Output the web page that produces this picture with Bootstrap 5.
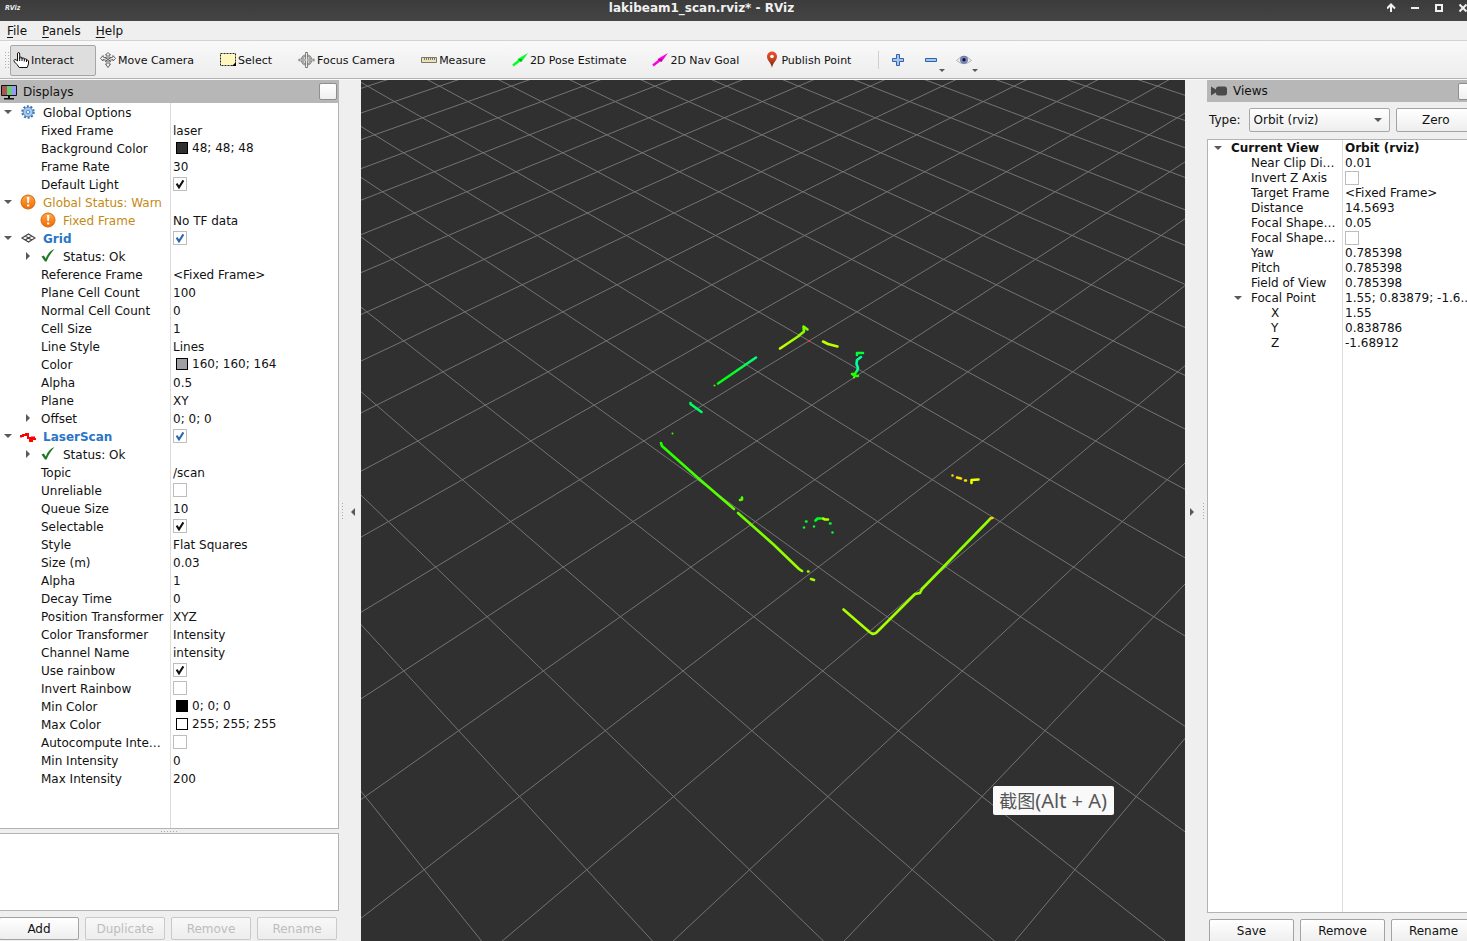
<!DOCTYPE html>
<html lang="en">
<head>
<meta charset="utf-8">
<meta name="viewport" content="width=device-width, initial-scale=1">
<title>lakibeam1_scan.rviz* - RViz</title>
<link href="https://cdn.jsdelivr.net/npm/bootstrap@5.3.0/dist/css/bootstrap.min.css" rel="stylesheet">
<style>
  body { font: 12px/18px "DejaVu Sans", sans-serif; color: #111; background: #efefef; }
  /* the window runs slightly past the right edge of the screen */
  .app { width: calc(100% + 11px); }
  button, select, input { font: inherit; color: inherit; }
  svg { display: block; flex: none; }

  .titlebar { height: 21px; background: linear-gradient(#3b3b3b, #454545); color: #f0f0f0; }
  .titlebar h1 { font-size: 12px; line-height: 16px; font-weight: 700; }
  .brand-mark { width: 19px; padding-left: 5px; font: italic bold 7px/16px "DejaVu Sans Condensed", sans-serif; }
  .win-controls { width: 98px; margin-left: -4px; height: 16px; }
  .win-controls button { width: 24px; flex: none; border: 0; padding: 0; background: none; display: grid; place-items: center; }

  .menubar { height: 20px; border-bottom: 1px solid #d3d3d3; gap: 1px; }
  .menubar a { color: #111; padding: 0 7px; line-height: 21px; text-decoration: none; }
  .menubar u { text-underline-offset: 2px; }

  .toolstrip { height: 38px; padding-top: 1px; border-bottom: 1px solid #b4b4b4; background: linear-gradient(#f9f9f9, #ededed); font-size: 11px; }
  .grip { width: 6px; height: 18px; background: radial-gradient(circle, #b4b4b4 1px, transparent 1px) 0 0/3px 3px; }
  .tool { height: 31px; border: 1px solid transparent; border-radius: 2px; background: none; padding: 2px 21px 0 2px; gap: 2px; margin-right: 1px; white-space: nowrap; }
  .tool svg { margin-bottom: 2px; }
  .tool.active { background: #dedede; border-color: #a6a6a6; }
  .tool-sep { width: 1px; height: 18px; background: #d0d0d0; margin: 0 7px 0 4px; }
  .tool-mini { border: 0; background: none; padding: 0; width: 24px; height: 30px; margin-right: 9px; display: grid; place-items: center; position: relative; }
  .tool-mini .drop { position: absolute; right: -2px; bottom: 3px; }

  .workspace { border-top: 1px solid #fafafa; }
  .pane-left { width: 339px; padding-bottom: 1px; }
  .pane-right { width: 271px; }
  .dock-head { background: #b7b7b7; height: 22px; padding-right: 2px; }
  .dock-head h2 { font-size: 12px; line-height: 22px; font-weight: 400; margin: 0 0 0 6px; }
  .pane-left .dock-head { height: 23px; }
  .dock-btn { width: 18px; height: 17px; padding: 0; border: 1px solid #8f8f8f; border-radius: 2px; background: linear-gradient(#fff, #f0f0f0); }

  .tree-box { border: 1px solid #b3b3b3; background: linear-gradient(#dcdcdc, #dcdcdc) var(--split) 0/1px 100% no-repeat #fff; overflow: hidden; min-height: 0; }
  .tree-left { --split: 170px; border-width: 0 1px 1px 0; }
  .tree-right { --split: 134px; }
  .tree { table-layout: fixed; width: 100%; --bs-table-bg: transparent; --bs-table-color: #111; color: #111; }
  .tree > tbody > tr > * { padding: 0; height: var(--row); line-height: calc(var(--row) - 2px); white-space: nowrap; overflow: hidden; font-weight: 400; vertical-align: top; text-align: left; }
  .tree > tbody > tr > td { padding: 2px 0 0 2px; }
  .tree-left .tree { --row: 18px; }
  .tree-right .tree { --row: 15px; }
  .tree .name-col { width: calc(var(--split) + 1px); }
  .tree-right .node { padding-left: 2px; }
  .node, .cell { display: flex; align-items: center; height: var(--row); }
  .cell { margin-top: -2px; }
  .node > .lvl1 { width: 20px; flex: none; }
  .node > .lvl2 { width: 40px; flex: none; }
  .twist { width: 20px; flex: none; padding-left: 4px; }
  .txt { padding: 2px 0 0 1px; }
  .ico + .txt { padding-left: 7px; }
  .warn { color: #c58a14; }
  .disp { color: #2a76c6; font-weight: 700; }
  .swatch { width: 12px; height: 12px; border: 1px solid #000; margin: 0 4px 0 3px; flex: none; }
  .tick { appearance: none; width: 14px; height: 14px; border: 1px solid #bdbdbd; border-radius: 0; background-color: #fff; margin: 0; display: block; flex: none; }
  .tick:checked { background: #fff url("data:image/svg+xml,%3Csvg xmlns='http://www.w3.org/2000/svg' viewBox='0 0 12 12'%3E%3Cpath d='M2.6 5.6 5 9.4 9.4 2.4' fill='none' stroke='%23111' stroke-width='2'/%3E%3C/svg%3E") center/12px no-repeat; }
  .tick-blue:checked { background-image: url("data:image/svg+xml,%3Csvg xmlns='http://www.w3.org/2000/svg' viewBox='0 0 12 12'%3E%3Cpath d='M2.6 5.6 5 9.4 9.4 2.4' fill='none' stroke='%232a66ad' stroke-width='2'/%3E%3C/svg%3E"); }

  .split-h { height: 4px; display: grid; place-items: center; }
  .split-h i { width: 18px; height: 1px; background: repeating-linear-gradient(90deg, #aaa 0 1px, transparent 1px 3px); }
  .info-box { height: 78px; background: #fff; border: 1px solid #b3b3b3; border-left: 0; }
  .actions { gap: 6px; padding: 6px 2px 0 0; margin-left: -1px; }
  .pane-right .actions { padding: 6px 2px 0; margin: 0 0 -2px; }
  .qbtn { flex: 1 1 0; height: 23px; line-height: 22px; padding: 0; border: 1px solid #a3a3a3; border-radius: 2px; background: linear-gradient(#fff, #eee); color: #111; font-size: 12px; text-align: center; }
  .pane-right .qbtn { height: 24px; }
  .qbtn:disabled { color: #bdbdbd; border-color: #c9c9c9; background: linear-gradient(#f8f8f8, #ededed); }
  .pane-right .type-row { padding: 6px 2px 7px; gap: 6px; }
  .type-row label { margin-right: 2px; }
  .type-row select { width: 141px; height: 24px; padding: 0 20px 0 4px; border: 1px solid #a8a8a8; border-radius: 2px; font-size: 12px; line-height: 18px; color: #111;
    background: url("data:image/svg+xml,%3Csvg xmlns='http://www.w3.org/2000/svg' viewBox='0 0 8 4'%3E%3Cpath d='M0 0h8L4 4z' fill='%23595959'/%3E%3C/svg%3E") right 7px center/8px 4px no-repeat, linear-gradient(#fff, #eee); }

  .gutter { width: 22px; padding: 2px 3px 0; }
  .gutter button { border: 0; background: none; padding: 0; }
  .gutter i { width: 1px; height: 17px; background: repeating-linear-gradient(#aaa 0 1px, transparent 1px 3px); }

  .view3d { background: #303030; min-width: 0; overflow: hidden; }
  .view3d svg { width: 100%; height: 100%; }
  .hint { right: 71px; bottom: 126px; height: 29px; padding: 0 7px 0 6px; background: #f9f9f9; border-radius: 2px; color: #575757; font: 20px/29px "Noto Sans", "Noto Sans CJK SC", sans-serif; white-space: nowrap; }
  .hint span { font-size: 18px; }
</style>
</head>
<body class="overflow-hidden">

<svg width="0" height="0" class="position-absolute" aria-hidden="true">
  <defs>
    <linearGradient id="orange" x1="0" y1="0" x2="0" y2="1"><stop offset="0" stop-color="#ffa64d"/><stop offset="1" stop-color="#ef6a00"/></linearGradient>
    <linearGradient id="pin" x1="0" y1="0" x2="0" y2="1"><stop offset="0" stop-color="#f0502c"/><stop offset=".5" stop-color="#c4401c"/><stop offset="1" stop-color="#4a2a10"/></linearGradient>
    <symbol id="open" viewBox="0 0 8 4"><path d="M0 0h8L4 4z" fill="#595959"/></symbol>
    <symbol id="shut" viewBox="0 0 8 8"><path d="M2 0v8l4-4z" fill="#595959"/></symbol>
    <symbol id="gear" viewBox="0 0 16 16"><circle cx="8" cy="8" r="6.500" fill="none" stroke="#3a72b8" stroke-width="2.400" stroke-dasharray="2.200 1.880"/><circle cx="8" cy="8" r="5.500" fill="#a9c8ea" stroke="#4a80c2"/><circle cx="8" cy="8" r="2" fill="#e4eefa" stroke="#4a80c2"/></symbol>
    <symbol id="alert" viewBox="0 0 16 16"><circle cx="8" cy="8" r="7" fill="url(#orange)" stroke="#d4690c"/><path d="M7 3h2.400L9 9H7.400zM7.100 10.400h2.200v2.200H7.100z" fill="#fff"/></symbol>
    <symbol id="mesh" viewBox="0 0 16 16"><path d="M2 8l6.500-4L15 8l-6.500 4zM5.200 6l6.600 4M11.800 6l-6.600 4" fill="none" stroke="#444" stroke-width="1.200"/></symbol>
    <symbol id="good" viewBox="0 0 16 16"><path d="M1.500 8.500l2.300-1 2 2.900C7.500 6 10 2.800 14.500 1 11 5 8.500 8.500 6.600 13.500H5z" fill="#1d7a24"/></symbol>
    <symbol id="scan" viewBox="0 0 16 16"><path d="M1 9.500V8h2V7h3V6h2v4h2v3h2V9.500h2V11h2" fill="none" stroke="#f00" stroke-width="2"/></symbol>
  </defs>
</svg>

<div class="app vh-100 d-flex flex-column">
  <header class="titlebar d-flex flex-shrink-0">
    <span class="brand-mark flex-shrink-0">RViz</span>
    <h1 class="flex-fill text-center m-0">lakibeam1_scan.rviz* - RViz</h1>
    <div class="win-controls d-flex flex-shrink-0">
      <button type="button" aria-label="Shade"><svg width="10" height="10" viewBox="0 0 10 10"><path d="M4 9V2M0 5.500 4 1.500l4 4" fill="none" stroke="#f0f0f0" stroke-width="2"/></svg></button>
      <button type="button" aria-label="Minimize"><svg width="10" height="10" viewBox="0 0 10 10"><path d="M0 5h8" stroke="#f0f0f0" stroke-width="2"/></svg></button>
      <button type="button" aria-label="Maximize"><svg width="10" height="10" viewBox="0 0 10 10"><path d="M1 2h6v6H1z" fill="none" stroke="#f0f0f0" stroke-width="2"/></svg></button>
      <button type="button" aria-label="Close"><svg width="10" height="10" viewBox="0 0 10 10"><path d="M.5 1.500l7 7M7.500 1.500l-7 7" stroke="#f0f0f0" stroke-width="2"/></svg></button>
    </div>
  </header>

  <nav class="menubar d-flex flex-shrink-0" aria-label="Menu">
    <a href="#"><u>F</u>ile</a><a href="#"><u>P</u>anels</a><a href="#"><u>H</u>elp</a>
  </nav>

  <div class="toolstrip d-flex align-items-center flex-shrink-0" role="toolbar">
    <span class="grip ms-1 flex-shrink-0"></span>
    <button type="button" class="tool active d-flex align-items-center"><svg width="16" height="16" viewBox="0 0 16 16"><path d="M4.500 9V2Q4.500.5 5.600.5T6.700 2v4.500V5.500Q7.800 4.600 9 5.600v1Q10 5.500 11.300 6.300v1q1-.8 2.200-.1v1q1.800-.6 2 .8V12l-1.300 3.500h-8L4 12.500 1.500 10Q.2 8 1.800 7.500 3 7.300 4.500 9z" fill="#fff" stroke="#111"/><path d="M6.700 6v3M9 6v3M11.300 7v2.500M13.500 8v2" stroke="#111"/></svg>Interact</button>
    <button type="button" class="tool d-flex align-items-center"><svg width="16" height="16" viewBox="0 0 16 16"><g fill="#f4f4f4" stroke="#555" stroke-width=".9"><path d="M8 .5 10.500 3H9v3.500L13 5V3.500l2.500 3L13 9V7.500L9 8.500V12h1.500L8 15.500 5.500 12H7V8.500L3 7.500V9L.5 6.500 3 3.500V5l4 1.500V3H5.500z"/><path d="M5 5l6 5M11 5l-6 5"/></g></svg>Move Camera</button>
    <button type="button" class="tool d-flex align-items-center"><svg width="16" height="16" viewBox="0 0 16 16"><path d="M.5 1.500h15v12H.5z" fill="#fff7bd" stroke="#222" stroke-dasharray="2 1"/><path d="M16 10v4h-4z"/></svg>Select</button>
    <button type="button" class="tool d-flex align-items-center"><svg width="17" height="16" viewBox="0 0 17 16"><g fill="none" stroke="#777"><circle cx="8.500" cy="8" r="4.500" stroke-width="2.400"/><circle cx="8.500" cy="8" r="4.500" stroke="#ddd" stroke-width=".8"/><path d="M8.500 0v16M.5 8h16" stroke-width="2.600"/><path d="M8.500 1v14M1.500 8h14" stroke="#e8e8e8"/></g></svg>Focus Camera</button>
    <button type="button" class="tool d-flex align-items-center"><svg width="16" height="16" viewBox="0 0 16 16"><path d="M.5 5.500h15v5H.5z" fill="#ece3ae" stroke="#777"/><path d="M3.500 6v2M5.500 6v2M7.500 6v2M9.500 6v2M11.500 6v2M13.500 6v2" stroke="#777"/></svg>Measure</button>
    <button type="button" class="tool d-flex align-items-center"><svg width="16" height="16" viewBox="0 0 16 16"><path d="M1 13.500 8 8" stroke="#0f2" stroke-width="2.500"/><path d="M5.500 7 16 1 9.500 10z" fill="#0f2"/><path d="M6 7l3 3 1-3z" fill="#0a9a1c"/></svg>2D Pose Estimate</button>
    <button type="button" class="tool d-flex align-items-center"><svg width="16" height="16" viewBox="0 0 16 16"><path d="M1 13.500 8 8" stroke="#f0d" stroke-width="2.500"/><path d="M5.500 7 16 1 9.500 10z" fill="#f0d"/><path d="M6 7l3 3 1-3z" fill="#a0088c"/></svg>2D Nav Goal</button>
    <button type="button" class="tool d-flex align-items-center"><svg width="14" height="18" viewBox="1 0 14 18"><path d="M8 17C7.500 12 3 10 3 5.500a5 5 0 0 1 10 0C13 10 8.500 12 8 17z" fill="url(#pin)"/><circle cx="8" cy="5.500" r="1.800" fill="#fff"/></svg>Publish Point</button>
    <span class="tool-sep flex-shrink-0"></span>
    <button type="button" class="tool-mini" aria-label="Add tool"><svg width="14" height="14" viewBox="0 0 14 14"><path d="M5.500 1.500h3v4h4v3h-4v4h-3v-4h-4v-3h4z" fill="#a6c6ec" stroke="#2f62a8"/></svg></button>
    <button type="button" class="tool-mini" aria-label="Remove tool"><svg width="14" height="14" viewBox="0 0 14 14"><path d="M1.500 5.500h11v3h-11z" fill="#a6c6ec" stroke="#2f62a8"/></svg><svg class="drop" width="6" height="3"><use href="#open"/></svg></button>
    <button type="button" class="tool-mini" aria-label="Visibility"><svg width="16" height="14" viewBox="0 0 16 14"><path d="M.5 7.500Q8-1 15.500 7.500 8 14 .5 7.500z" fill="#eee" stroke="#b4b4b4"/><circle cx="8" cy="6.800" r="3.700" fill="#7c8cc0" stroke="#5a6490" stroke-width=".6"/><circle cx="8" cy="6.800" r="1.700" fill="#101430"/></svg><svg class="drop" width="6" height="3"><use href="#open"/></svg></button>
  </div>

  <main class="workspace d-flex flex-fill overflow-hidden">
    <section class="pane-left d-flex flex-column flex-shrink-0">
      <div class="dock-head d-flex align-items-center flex-shrink-0">
        <svg width="17" height="16" viewBox="0 0 17 16"><path d="M1.500 1.500h15v10h-15z" fill="#b9b9c9" stroke="#111"/><path d="M2 2h5v9H2z" fill="#a55"/><path d="M7 2h5v9H7z" fill="#6c7"/><path d="M12 2h4v9h-4z" fill="#99e"/><path d="M8 12h2v2h4v1.500H4V14h4z" fill="#111"/></svg>
        <h2>Displays</h2>
        <button type="button" class="dock-btn ms-auto" aria-label="Float Displays"></button>
      </div>
      <div class="tree-box tree-left flex-fill">
        <table class="table table-borderless m-0 tree">
          <colgroup><col class="name-col"><col></colgroup>
          <tbody>
            <tr><th scope="row"><div class="node"><span class="twist"><svg width="8" height="4"><use href="#open"/></svg></span><svg class="ico" width="16" height="14"><use href="#gear"/></svg><span class="txt">Global Options</span></div></th><td></td></tr>
            <tr><th scope="row"><div class="node"><span class="lvl2"></span><span class="txt">Fixed Frame</span></div></th><td>laser</td></tr>
            <tr><th scope="row"><div class="node"><span class="lvl2"></span><span class="txt">Background Color</span></div></th><td><div class="cell"><span class="swatch" style="background:rgb(48,48,48)"></span>48; 48; 48</div></td></tr>
            <tr><th scope="row"><div class="node"><span class="lvl2"></span><span class="txt">Frame Rate</span></div></th><td>30</td></tr>
            <tr><th scope="row"><div class="node"><span class="lvl2"></span><label class="txt" for="light">Default Light</label></div></th><td><div class="cell"><input class="tick" type="checkbox" id="light" checked></div></td></tr>
            <tr><th scope="row"><div class="node"><span class="twist"><svg width="8" height="4"><use href="#open"/></svg></span><svg class="ico" width="16" height="16"><use href="#alert"/></svg><span class="txt warn">Global Status: Warn</span></div></th><td></td></tr>
            <tr><th scope="row"><div class="node"><span class="lvl2"></span><svg class="ico" width="16" height="16"><use href="#alert"/></svg><span class="txt warn">Fixed Frame</span></div></th><td>No TF data</td></tr>
            <tr><th scope="row"><div class="node"><span class="twist"><svg width="8" height="4"><use href="#open"/></svg></span><svg class="ico" width="16" height="16"><use href="#mesh"/></svg><label class="txt disp" for="grid-on">Grid</label></div></th><td><div class="cell"><input class="tick tick-blue" type="checkbox" id="grid-on" checked></div></td></tr>
            <tr><th scope="row"><div class="node"><span class="lvl1"></span><span class="twist"><svg width="8" height="8"><use href="#shut"/></svg></span><svg class="ico" width="16" height="16"><use href="#good"/></svg><span class="txt">Status: Ok</span></div></th><td></td></tr>
            <tr><th scope="row"><div class="node"><span class="lvl2"></span><span class="txt">Reference Frame</span></div></th><td>&lt;Fixed Frame&gt;</td></tr>
            <tr><th scope="row"><div class="node"><span class="lvl2"></span><span class="txt">Plane Cell Count</span></div></th><td>100</td></tr>
            <tr><th scope="row"><div class="node"><span class="lvl2"></span><span class="txt">Normal Cell Count</span></div></th><td>0</td></tr>
            <tr><th scope="row"><div class="node"><span class="lvl2"></span><span class="txt">Cell Size</span></div></th><td>1</td></tr>
            <tr><th scope="row"><div class="node"><span class="lvl2"></span><span class="txt">Line Style</span></div></th><td>Lines</td></tr>
            <tr><th scope="row"><div class="node"><span class="lvl2"></span><span class="txt">Color</span></div></th><td><div class="cell"><span class="swatch" style="background:rgb(160,160,164)"></span>160; 160; 164</div></td></tr>
            <tr><th scope="row"><div class="node"><span class="lvl2"></span><span class="txt">Alpha</span></div></th><td>0.5</td></tr>
            <tr><th scope="row"><div class="node"><span class="lvl2"></span><span class="txt">Plane</span></div></th><td>XY</td></tr>
            <tr><th scope="row"><div class="node"><span class="lvl1"></span><span class="twist"><svg width="8" height="8"><use href="#shut"/></svg></span><span class="txt">Offset</span></div></th><td>0; 0; 0</td></tr>
            <tr><th scope="row"><div class="node"><span class="twist"><svg width="8" height="4"><use href="#open"/></svg></span><svg class="ico" width="16" height="16"><use href="#scan"/></svg><label class="txt disp" for="scan-on">LaserScan</label></div></th><td><div class="cell"><input class="tick tick-blue" type="checkbox" id="scan-on" checked></div></td></tr>
            <tr><th scope="row"><div class="node"><span class="lvl1"></span><span class="twist"><svg width="8" height="8"><use href="#shut"/></svg></span><svg class="ico" width="16" height="16"><use href="#good"/></svg><span class="txt">Status: Ok</span></div></th><td></td></tr>
            <tr><th scope="row"><div class="node"><span class="lvl2"></span><span class="txt">Topic</span></div></th><td>/scan</td></tr>
            <tr><th scope="row"><div class="node"><span class="lvl2"></span><label class="txt" for="unreliable">Unreliable</label></div></th><td><div class="cell"><input class="tick" type="checkbox" id="unreliable"></div></td></tr>
            <tr><th scope="row"><div class="node"><span class="lvl2"></span><span class="txt">Queue Size</span></div></th><td>10</td></tr>
            <tr><th scope="row"><div class="node"><span class="lvl2"></span><label class="txt" for="selectable">Selectable</label></div></th><td><div class="cell"><input class="tick" type="checkbox" id="selectable" checked></div></td></tr>
            <tr><th scope="row"><div class="node"><span class="lvl2"></span><span class="txt">Style</span></div></th><td>Flat Squares</td></tr>
            <tr><th scope="row"><div class="node"><span class="lvl2"></span><span class="txt">Size (m)</span></div></th><td>0.03</td></tr>
            <tr><th scope="row"><div class="node"><span class="lvl2"></span><span class="txt">Alpha</span></div></th><td>1</td></tr>
            <tr><th scope="row"><div class="node"><span class="lvl2"></span><span class="txt">Decay Time</span></div></th><td>0</td></tr>
            <tr><th scope="row"><div class="node"><span class="lvl2"></span><span class="txt">Position Transformer</span></div></th><td>XYZ</td></tr>
            <tr><th scope="row"><div class="node"><span class="lvl2"></span><span class="txt">Color Transformer</span></div></th><td>Intensity</td></tr>
            <tr><th scope="row"><div class="node"><span class="lvl2"></span><span class="txt">Channel Name</span></div></th><td>intensity</td></tr>
            <tr><th scope="row"><div class="node"><span class="lvl2"></span><label class="txt" for="rainbow">Use rainbow</label></div></th><td><div class="cell"><input class="tick" type="checkbox" id="rainbow" checked></div></td></tr>
            <tr><th scope="row"><div class="node"><span class="lvl2"></span><label class="txt" for="inv-rainbow">Invert Rainbow</label></div></th><td><div class="cell"><input class="tick" type="checkbox" id="inv-rainbow"></div></td></tr>
            <tr><th scope="row"><div class="node"><span class="lvl2"></span><span class="txt">Min Color</span></div></th><td><div class="cell"><span class="swatch" style="background:rgb(0,0,0)"></span>0; 0; 0</div></td></tr>
            <tr><th scope="row"><div class="node"><span class="lvl2"></span><span class="txt">Max Color</span></div></th><td><div class="cell"><span class="swatch" style="background:rgb(255,255,255)"></span>255; 255; 255</div></td></tr>
            <tr><th scope="row"><div class="node"><span class="lvl2"></span><label class="txt" for="autocompute">Autocompute Inte…</label></div></th><td><div class="cell"><input class="tick" type="checkbox" id="autocompute"></div></td></tr>
            <tr><th scope="row"><div class="node"><span class="lvl2"></span><span class="txt">Min Intensity</span></div></th><td>0</td></tr>
            <tr><th scope="row"><div class="node"><span class="lvl2"></span><span class="txt">Max Intensity</span></div></th><td>200</td></tr>
          </tbody>
        </table>
      </div>
      <div class="split-h flex-shrink-0"><i></i></div>
      <div class="info-box flex-shrink-0"></div>
      <div class="actions d-flex flex-shrink-0">
        <button type="button" class="qbtn">Add</button>
        <button type="button" class="qbtn" disabled>Duplicate</button>
        <button type="button" class="qbtn" disabled>Remove</button>
        <button type="button" class="qbtn" disabled>Rename</button>
      </div>
    </section>

    <div class="gutter d-flex align-items-center flex-shrink-0">
      <i></i>
      <button type="button" class="ms-2" aria-label="Hide left panels"><svg width="4" height="8" viewBox="0 0 4 8"><path d="M4 0v8L0 4z" fill="#595959"/></svg></button>
    </div>

    <section class="view3d position-relative flex-fill" aria-label="3D view">
      <svg viewBox="361 80 824 861" preserveAspectRatio="xMidYMid slice">
        <defs>
          <linearGradient id="g1" gradientUnits="userSpaceOnUse" x1="661" y1="442" x2="802" y2="570"><stop offset="0" stop-color="#2f0"/><stop offset="1" stop-color="#a0ff00"/></linearGradient>
          <linearGradient id="g2" gradientUnits="userSpaceOnUse" x1="717" y1="384" x2="756" y2="357"><stop offset=".3" stop-color="#0f1"/><stop offset="1" stop-color="#00ff80"/></linearGradient>
          <linearGradient id="g3" gradientUnits="userSpaceOnUse" x1="780" y1="349" x2="805" y2="327"><stop offset="0" stop-color="#cf0"/><stop offset="1" stop-color="#7f0"/></linearGradient>
          <linearGradient id="g4" gradientUnits="userSpaceOnUse" x1="873" y1="635" x2="992" y2="518"><stop offset="0" stop-color="#af0"/><stop offset=".8" stop-color="#8f0"/><stop offset=".98" stop-color="#9f0"/><stop offset="1" stop-color="#fc0"/></linearGradient>
        </defs>
        <path id="ground" fill="none" stroke="#747476" stroke-width="1"/>
        <g fill="none" stroke-width="2.600" stroke-linecap="round" stroke-linejoin="round">
          <path stroke="url(#g1)" d="M661 443l1 3 36 32 36 31M738 513l35 31 26 25 3 2"/>
          <path stroke="#9f0" d="M808 571.500h.5M811 579l3 1"/>
          <path stroke="#af0" d="M843.500 609.500l26 22.500"/>
          <path stroke="url(#g4)" d="M871 633l2 1 3-1 39-39 5-1 2-4 69-71h1.500"/>
          <path stroke="#0f2" d="M806 521.500h.5M804 527.500h0M814 526.500h0M815.500 520.500l2-2h3.500M830 523.500h.5M832.500 532.500h0"/>
          <path stroke="#af0" d="M823 518.500l2 1h3"/>
          <path stroke="#fd0" d="M952.500 475.500h0M957 477.500l4 1M965 480.500h1"/>
          <path stroke="#ef0" d="M971.500 483v-3l7-.5"/>
          <path stroke="#5f0" d="M740 500h.5M742 497.500v2"/>
          <path stroke="#3f0" stroke-width="2" d="M672.500 433.500h0M714.500 385.500h0"/>
          <path stroke="#00ff60" d="M690.500 403v1l11 8"/>
          <path stroke="url(#g2)" d="M718 383.500 756 357.500"/>
          <path stroke="url(#g3)" d="M780 348.500l18-12 6-5-.5-5 4 3"/>
          <path stroke="#bf0" d="M823 341.500l5 2.500 9.500 2.500"/>
          <path stroke="#0f3" d="M857 355v-2h6"/>
          <path stroke="#00ffa0" d="M861 357l-4 3-.5 4 1.500 4-1 3"/>
          <path stroke="#2f0" d="M856 372l-1 2h-3l3 2h3"/>
          <path stroke="#9f0" stroke-width="2" d="M854 377.500h0"/>
        </g>
        <path d="M808 340h2v2h-2z" fill="#e33"/>
      </svg>
      <div class="hint position-absolute"><span>截图</span>(Alt + A)</div>
    </section>

    <div class="gutter d-flex align-items-center flex-shrink-0">
      <button type="button" aria-label="Hide right panels"><svg width="8" height="8"><use href="#shut"/></svg></button>
      <i class="ms-auto"></i>
    </div>

    <section class="pane-right d-flex flex-column flex-shrink-0">
      <div class="dock-head d-flex align-items-center flex-shrink-0">
        <svg class="ms-1" width="16" height="10" viewBox="0 0 16 10"><path d="M0 0.500 5 3.500V3q0-2.500 2.500-2.500h6Q16 .5 16 3v4q0 2.500-2.500 2.500h-6Q5 9.500 5 7v-.5L0 9.500z" fill="#4a4a4a"/></svg>
        <h2>Views</h2>
        <button type="button" class="dock-btn ms-auto" aria-label="Float Views"></button>
      </div>
      <div class="type-row d-flex align-items-center flex-shrink-0">
        <label for="view-type">Type:</label>
        <select id="view-type" class="form-select flex-shrink-0"><option>Orbit (rviz)</option></select>
        <button type="button" class="qbtn">Zero</button>
      </div>
      <div class="tree-box tree-right flex-fill">
        <table class="table table-borderless m-0 tree">
          <colgroup><col class="name-col"><col></colgroup>
          <tbody>
            <tr><th scope="row"><div class="node"><span class="twist"><svg width="8" height="4"><use href="#open"/></svg></span><b class="txt">Current View</b></div></th><td><b>Orbit (rviz)</b></td></tr>
            <tr><th scope="row"><div class="node"><span class="lvl2"></span><span class="txt">Near Clip Di…</span></div></th><td>0.01</td></tr>
            <tr><th scope="row"><div class="node"><span class="lvl2"></span><label class="txt" for="inv-z">Invert Z Axis</label></div></th><td><div class="cell"><input class="tick" type="checkbox" id="inv-z"></div></td></tr>
            <tr><th scope="row"><div class="node"><span class="lvl2"></span><span class="txt">Target Frame</span></div></th><td>&lt;Fixed Frame&gt;</td></tr>
            <tr><th scope="row"><div class="node"><span class="lvl2"></span><span class="txt">Distance</span></div></th><td>14.5693</td></tr>
            <tr><th scope="row"><div class="node"><span class="lvl2"></span><span class="txt">Focal Shape…</span></div></th><td>0.05</td></tr>
            <tr><th scope="row"><div class="node"><span class="lvl2"></span><label class="txt" for="shape-fixed">Focal Shape…</label></div></th><td><div class="cell"><input class="tick" type="checkbox" id="shape-fixed"></div></td></tr>
            <tr><th scope="row"><div class="node"><span class="lvl2"></span><span class="txt">Yaw</span></div></th><td>0.785398</td></tr>
            <tr><th scope="row"><div class="node"><span class="lvl2"></span><span class="txt">Pitch</span></div></th><td>0.785398</td></tr>
            <tr><th scope="row"><div class="node"><span class="lvl2"></span><span class="txt">Field of View</span></div></th><td>0.785398</td></tr>
            <tr><th scope="row"><div class="node"><span class="lvl1"></span><span class="twist"><svg width="8" height="4"><use href="#open"/></svg></span><span class="txt">Focal Point</span></div></th><td>1.55; 0.83879; -1.6..</td></tr>
            <tr><th scope="row"><div class="node"><span class="lvl1"></span><span class="lvl2"></span><span class="txt">X</span></div></th><td>1.55</td></tr>
            <tr><th scope="row"><div class="node"><span class="lvl1"></span><span class="lvl2"></span><span class="txt">Y</span></div></th><td>0.838786</td></tr>
            <tr><th scope="row"><div class="node"><span class="lvl1"></span><span class="lvl2"></span><span class="txt">Z</span></div></th><td>-1.68912</td></tr>
          </tbody>
        </table>
      </div>
      <div class="actions d-flex flex-shrink-0">
        <button type="button" class="qbtn">Save</button>
        <button type="button" class="qbtn">Remove</button>
        <button type="button" class="qbtn">Rename</button>
      </div>
    </section>
  </main>
</div>

<script src="https://cdn.jsdelivr.net/npm/bootstrap@5.3.0/dist/js/bootstrap.bundle.min.js"></script>
<script>
  // Ground grid seen by the orbit camera at yaw and pitch of 45 degrees:
  // cell corners with the same i + j lie on one horizontal row of the view.
  function project(i, j) {
    const scale = 1 / (0.009867 - 0.0003382 * (i + j));
    const x = 773 + scale * ((i - j) / 2 + 0.3556);
    const y = scale / 0.11598 - 533;
    return x.toFixed(2) + ' ' + y.toFixed(2);
  }
  const near = 20, far = -40;
  let d = '';
  for (let k = -40; k <= 40; k++) {
    d += 'M' + project(k, far - k) + 'L' + project(k, near - k);
    d += 'M' + project(far - k, k) + 'L' + project(near - k, k);
  }
  document.getElementById('ground').setAttribute('d', d);
</script>
</body>
</html>
